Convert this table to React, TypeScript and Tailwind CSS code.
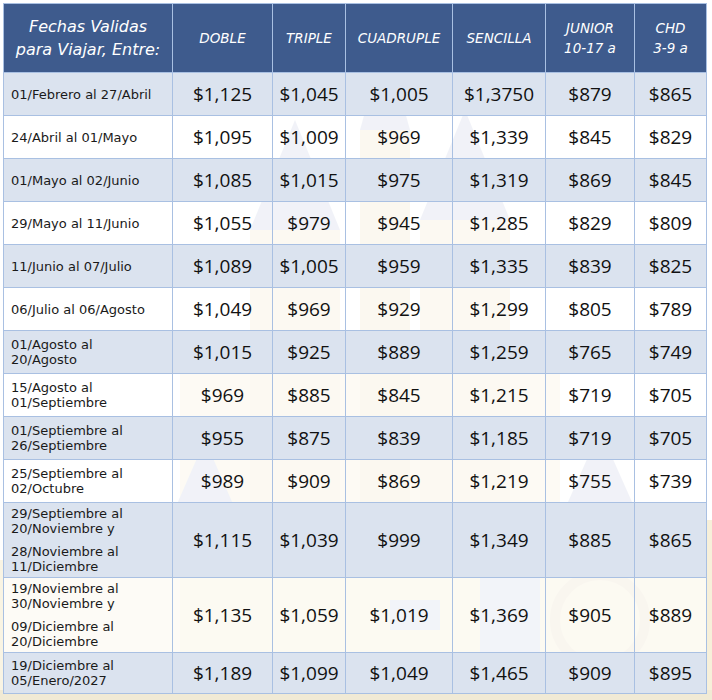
import React from "react";

type Row = { dates: string[][]; prices: string[]; h: number };

const rows: Row[] = [
  { dates: [["01/Febrero al 27/Abril"]], prices: ["$1,125", "$1,045", "$1,005", "$1,3750", "$879", "$865"], h: 43 },
  { dates: [["24/Abril al 01/Mayo"]], prices: ["$1,095", "$1,009", "$969", "$1,339", "$845", "$829"], h: 43 },
  { dates: [["01/Mayo al 02/Junio"]], prices: ["$1,085", "$1,015", "$975", "$1,319", "$869", "$845"], h: 43 },
  { dates: [["29/Mayo al 11/Junio"]], prices: ["$1,055", "$979", "$945", "$1,285", "$829", "$809"], h: 43 },
  { dates: [["11/Junio al 07/Julio"]], prices: ["$1,089", "$1,005", "$959", "$1,335", "$839", "$825"], h: 43 },
  { dates: [["06/Julio al 06/Agosto"]], prices: ["$1,049", "$969", "$929", "$1,299", "$805", "$789"], h: 43 },
  { dates: [["01/Agosto al", "20/Agosto"]], prices: ["$1,015", "$925", "$889", "$1,259", "$765", "$749"], h: 43 },
  { dates: [["15/Agosto al", "01/Septiembre"]], prices: ["$969", "$885", "$845", "$1,215", "$719", "$705"], h: 43 },
  { dates: [["01/Septiembre al", "26/Septiembre"]], prices: ["$955", "$875", "$839", "$1,185", "$719", "$705"], h: 43 },
  { dates: [["25/Septiembre al", "02/Octubre"]], prices: ["$989", "$909", "$869", "$1,219", "$755", "$739"], h: 43 },
  {
    dates: [["29/Septiembre al", "20/Noviembre y"], ["28/Noviembre al", "11/Diciembre"]],
    prices: ["$1,115", "$1,039", "$999", "$1,349", "$885", "$865"],
    h: 75,
  },
  {
    dates: [["19/Noviembre al", "30/Noviembre y"], ["09/Diciembre al", "20/Diciembre"]],
    prices: ["$1,135", "$1,059", "$1,019", "$1,369", "$905", "$889"],
    h: 75,
  },
  { dates: [["19/Diciembre al", "05/Enero/2027"]], prices: ["$1,189", "$1,099", "$1,049", "$1,465", "$909", "$895"], h: 41 },
];

const widths = [169, 100, 73, 107, 93, 89, 72];

/** Faint castle picture that shows through the white rows. */
function CastleBackdrop() {
  return (
    <svg className="pointer-events-none absolute inset-0 h-full w-full" viewBox="0 0 712 700" preserveAspectRatio="none">
      <g opacity="0.35">
        <rect x="180" y="330" width="380" height="370" fill="#ecdca6" />
        <rect x="250" y="230" width="90" height="470" fill="#e6d394" />
        <rect x="420" y="220" width="90" height="480" fill="#e6d394" />
        <rect x="360" y="130" width="50" height="570" fill="#ddc784" />
        <polygon points="360,130 385,40 410,130" fill="#8b9ac6" />
        <polygon points="250,230 295,120 340,230" fill="#8b9ac6" />
        <polygon points="420,220 465,110 510,220" fill="#8b9ac6" />
        <rect x="180" y="520" width="532" height="180" fill="#e9d598" />
        <polygon points="170,520 205,440 240,520" fill="#8b9ac6" />
        <polygon points="560,520 600,430 640,520" fill="#8b9ac6" />
        <rect x="480" y="560" width="60" height="100" fill="#97a5cc" />
        <circle cx="600" cy="620" r="45" fill="none" stroke="#cdb77f" strokeWidth="10" />
        <rect x="390" y="600" width="50" height="30" fill="#97a5cc" />
        <rect x="0" y="560" width="180" height="140" fill="#eee0b4" />
        <rect x="0" y="690" width="712" height="10" fill="#d9c48a" />
      </g>
    </svg>
  );
}

export default function App() {
  return (
    <div className="relative h-[700px] w-[712px] overflow-hidden bg-white">
      <CastleBackdrop />
      <div className="relative pl-[3px] pt-[3px]">
        <table className="table-fixed border-collapse" style={{ width: 704 }}>
          <colgroup>
            {widths.map((w, i) => (
              <col key={i} style={{ width: w }} />
            ))}
          </colgroup>
          <thead>
            <tr className="h-[69px] bg-[#3e5b8d] text-white italic [font-family:'DejaVu_Sans',sans-serif]">
              <th className="border border-[#a9c0e2] text-center text-[16px] leading-[23px] font-normal">
                Fechas Validas
                <br />
                para Viajar, Entre:
              </th>
              <th className="border border-[#a9c0e2] text-center text-[13.5px] font-normal">DOBLE</th>
              <th className="border border-[#a9c0e2] text-center text-[13.5px] font-normal">TRIPLE</th>
              <th className="border border-[#a9c0e2] text-center text-[13.5px] font-normal">CUADRUPLE</th>
              <th className="border border-[#a9c0e2] text-center text-[13.5px] font-normal">SENCILLA</th>
              <th className="border border-[#a9c0e2] text-center text-[13.5px] leading-[20px] font-normal">
                JUNIOR
                <br />
                10-17 a
              </th>
              <th className="border border-[#a9c0e2] text-center text-[13.5px] leading-[20px] font-normal">
                CHD
                <br />
                3-9 a
              </th>
            </tr>
          </thead>
          <tbody>
            {rows.map((row, i) => (
              <tr key={i} className={i % 2 === 0 ? "bg-[#dbe3ef]" : "bg-white/65"} style={{ height: row.h }}>
                <td className="border border-[#a9c0e2] px-[7px] align-middle text-[13px] leading-[15px] text-[#1a1a1a] [font-family:'DejaVu_Sans',sans-serif]">
                  <div className="flex flex-col gap-[8px]">
                    {row.dates.map((para, j) => (
                      <div key={j}>
                        {para.map((line) => (
                          <div key={line}>{line}</div>
                        ))}
                      </div>
                    ))}
                  </div>
                </td>
                {row.prices.map((p, j) => (
                  <td
                    key={j}
                    className="border border-[#a9c0e2] text-center align-middle text-[19px] text-[#111] [font-family:'Open_Sans',sans-serif]"
                  >
                    {p}
                  </td>
                ))}
              </tr>
            ))}
          </tbody>
        </table>
      </div>
    </div>
  );
}
